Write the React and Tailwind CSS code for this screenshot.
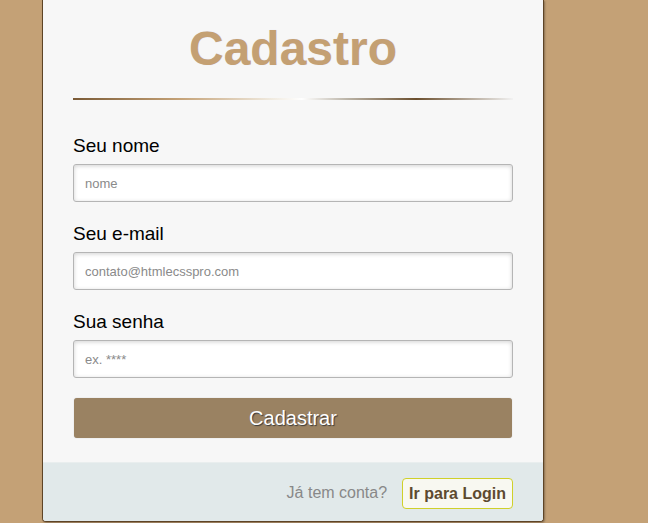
export default function App() {
  const fields = [
    { label: "Seu nome", ph: "nome", type: "text" },
    { label: "Seu e-mail", ph: "contato@htmlecsspro.com", type: "email" },
    { label: "Sua senha", ph: "ex. ****", type: "password" },
  ];
  return (
    <div className="min-h-[523px] w-full bg-[#c4a176] font-['Liberation_Sans',Arial,sans-serif]">
      <div className="ml-[42px] w-[502px] h-[522px] flex flex-col bg-[#f7f7f7] border-x border-b border-[#5e4426] rounded-b-[4px] shadow-[1px_1px_2px_rgba(0,0,0,0.3)] overflow-hidden">
        <div className="px-[30px] flex-1 flex flex-col">
          <h1 className="mt-[21px] text-center text-[48px] leading-[55px] font-bold text-[#c4a073] [text-shadow:0_0_1px_#dcdcf4]">
            Cadastro
          </h1>
          <div className="mt-[22px] h-[2px] w-full bg-[linear-gradient(to_right,#7a5a36_0%,#c4a176_24%,#f0eadf_45%,#ffffff_52%,#bdb6aa_62%,#6b4f2e_78%,#f2f2f2_100%)]" />
          <form className="mt-[35px] flex flex-col" onSubmit={(e) => e.preventDefault()}>
            {fields.map((f, i) => (
              <div key={i} className={i > 0 ? "mt-[21px] flex flex-col" : "flex flex-col"}>
                <label className="text-[19px] leading-[22px] text-black">{f.label}</label>
                <input
                  type={f.type}
                  placeholder={f.ph}
                  className="mt-[7px] h-[38px] w-full rounded-[3px] border border-[#b5b5b5] bg-white px-[11px] text-[13px] text-[#333] placeholder:text-[#8a8a8a] shadow-[inset_0_1px_4px_rgba(0,0,0,0.18)] outline-none"
                />
              </div>
            ))}
            <button
              type="submit"
              className="mt-[20px] mx-px h-[40px] w-[438px] rounded-[3px] bg-[#9a8262] text-[20px] text-white [text-shadow:1px_1px_1px_#3a3a3a] shadow-[0_0_1px_rgba(0,0,0,0.3)]"
            >
              Cadastrar
            </button>
          </form>
        </div>
        <div className="h-[59px] border-t border-[#e9eeee] bg-[#e1e9ea] px-[30px] pt-[15px] flex items-start justify-end gap-[15px]">
          <span className="mt-[6px] text-[16px] leading-[18px] text-[#888888]">Já tem conta?</span>
          <a
            href="#"
            className="h-[31px] px-[6px] flex items-center rounded-[4px] border border-[#cfd02a] bg-[#f8f8f1] text-[16px] font-bold text-[#5d4a2f]"
          >
            Ir para Login
          </a>
        </div>
      </div>
    </div>
  );
}
